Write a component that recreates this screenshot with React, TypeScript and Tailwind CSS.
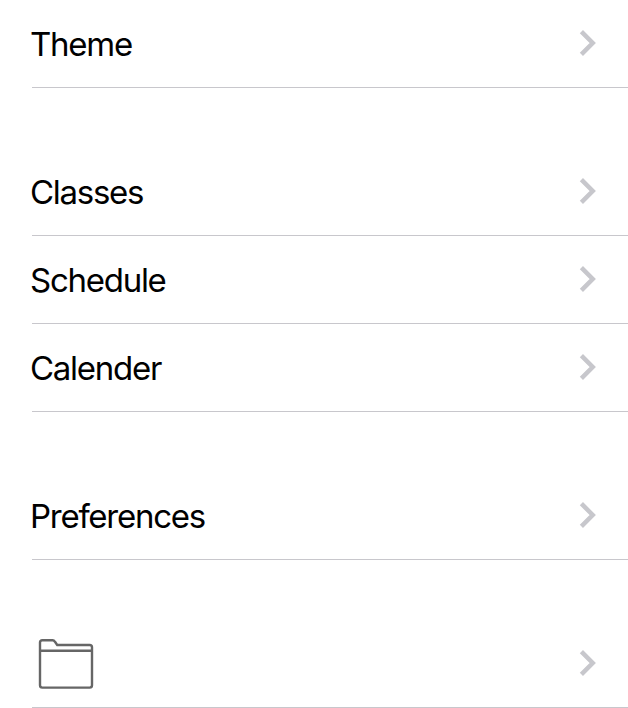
type RowProps = { label?: string };

function Chevron() {
  return (
    <svg className="mb-0.5" width="18" height="28" viewBox="0 0 18 28" fill="none" stroke="#c7c7cc" strokeWidth="4.5">
      <path d="M2.4 2.7 L13.7 14 L2.4 25.3" />
    </svg>
  );
}

function Folder() {
  return (
    <svg width="56" height="52" viewBox="0 0 56 52" fill="none" stroke="#666" strokeWidth="2.4" strokeLinejoin="round">
      <path d="M2 12.8V4.5Q2 2.2 4.3 2.2H14.6Q16 2.2 17 3.8L19.2 7H51.7Q54 7 54 9.3V47.3Q54 49.6 51.7 49.6H4.3Q2 49.6 2 47.3V12.8H54" />
    </svg>
  );
}

function Row({ label }: RowProps) {
  return (
    <div className="ml-8 flex h-22 items-center justify-between border-b border-[#c8c7cc] pr-[31px]">
      {label ? (
        <span className="-ml-[2px] mt-px text-[33px] leading-10 tracking-[-1.27px]">{label}</span>
      ) : (
        <span className="ml-[6px]"><Folder /></span>
      )}
      <Chevron />
    </div>
  );
}

export default function App() {
  return (
    <main className="flex h-[708px] w-[628px] flex-col gap-[60px] overflow-hidden bg-white font-['Inter',sans-serif] text-black">
      <section><Row label="Theme" /></section>
      <section><Row label="Classes" /><Row label="Schedule" /><Row label="Calender" /></section>
      <section><Row label="Preferences" /></section>
      <section><Row /></section>
    </main>
  );
}
